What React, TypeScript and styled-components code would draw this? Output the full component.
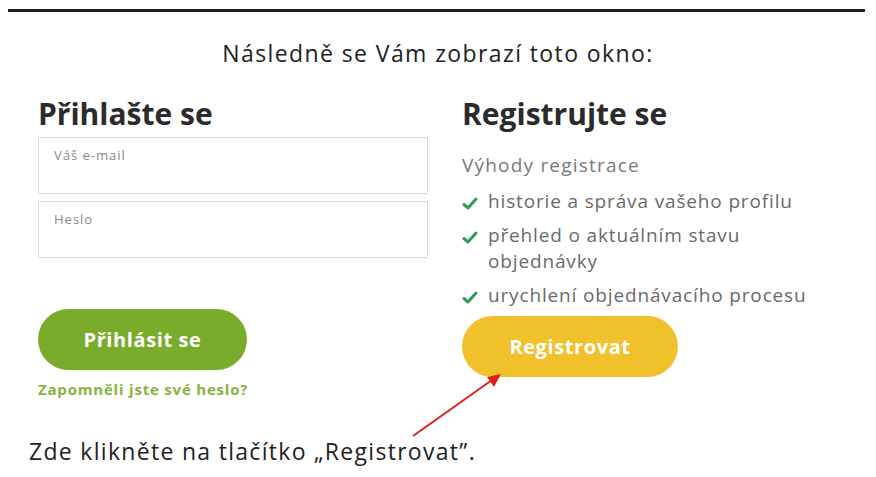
import styled, { createGlobalStyle } from 'styled-components';

const Global = createGlobalStyle`
    html, body {
        margin: 0;
        background: #fff;
    }
    body {
        font-family: "Open Sans", "Noto Sans", sans-serif;
        color: #222;
    }
`

const Page = styled.div`
    position: relative;
    width: 876px;
    height: 477px;
    overflow: hidden;
`

const Rule = styled.div`
    height: 3px;
    background: #1f1f1f;
    margin: 9px 11px 0 8px;
`

const Lead = styled.p`
    margin: 26px 0 0;
    text-align: center;
    font-size: 23px;
    line-height: 30px;
    letter-spacing: 1.4px;
    color: #222;
`

const Columns = styled.div`
    display: grid;
    grid-template-columns: 390px 1fr;
    column-gap: 34px;
    padding-left: 38px;
    margin-top: 29px;
`

const Column = styled.div`
    display: flex;
    flex-direction: column;
    align-items: flex-start;
`

const Heading = styled.h2`
    margin: 0;
    font-size: 30px;
    line-height: 34px;
    font-weight: 700;
    color: #2b2b2b;
`

const Field = styled.label<{ $top: number }>`
    box-sizing: border-box;
    display: block;
    width: 390px;
    height: 57px;
    margin-top: ${p => p.$top}px;
    border: 1px solid #dcdcdc;
    padding: 9px 15px;
    font-size: 13px;
    line-height: 16px;
    letter-spacing: 1px;
    color: #8a8a8a;
`

const Pill = styled.button<{ $bg: string; $w: number; $top: number }>`
    width: ${p => p.$w}px;
    height: 61px;
    margin-top: ${p => p.$top}px;
    border: none;
    border-radius: 31px;
    background: ${p => p.$bg};
    color: #fff;
    font-family: inherit;
    font-size: 20px;
    font-weight: 700;
    letter-spacing: 0.6px;
    cursor: pointer;
`

const Forgot = styled.a`
    margin-top: 9px;
    font-size: 15px;
    line-height: 20px;
    font-weight: 700;
    letter-spacing: 0.8px;
    color: #88b43e;
    text-decoration: none;
`

const Sub = styled.div`
    margin-top: 22px;
    font-size: 19px;
    line-height: 24px;
    letter-spacing: 1.2px;
    color: #7a7a7a;
`

const List = styled.ul`
    list-style: none;
    margin: 11px 0 0;
    padding: 0;
    display: flex;
    flex-direction: column;
    gap: 8px;
`

const Item = styled.li`
    display: flex;
    align-items: flex-start;
    gap: 10px;
    width: 370px;
    font-size: 19px;
    line-height: 26px;
    letter-spacing: 0.85px;
    color: #6a6a6a;

    svg {
        flex: none;
        margin-top: 9px;
    }
`

const Note = styled.p`
    margin: 37px 0 0 29px;
    font-size: 23px;
    line-height: 30px;
    letter-spacing: 1.3px;
    color: #222;
`

const Arrow = styled.svg`
    position: absolute;
    left: 0;
    top: 0;
    pointer-events: none;
`

const Check = () => (
    <svg width="16" height="13" viewBox="0 0 16 13">
        <path d="M2 7.5 L6 11 L14 2" fill="none" stroke="#2f9b55" strokeWidth="3" strokeLinecap="round" strokeLinejoin="round" />
    </svg>
)

const benefits = [
    'historie a správa vašeho profilu',
    'přehled o aktuálním stavu objednávky',
    'urychlení objednávacího procesu',
]

export default function App() {
    return (
        <Page>
            <Global />
            <Rule />
            <Lead>Následně se Vám zobrazí toto okno:</Lead>
            <Columns>
                <Column>
                    <Heading>Přihlašte se</Heading>
                    <Field $top={6}>Váš e-mail</Field>
                    <Field $top={7}>Heslo</Field>
                    <Pill $bg="#7aac2b" $w={209} $top={51}>Přihlásit se</Pill>
                    <Forgot href="#">Zapomněli jste své heslo?</Forgot>
                </Column>
                <Column>
                    <Heading>Registrujte se</Heading>
                    <Sub>Výhody registrace</Sub>
                    <List>
                        {benefits.map(b => (
                            <Item key={b}><Check />{b}</Item>
                        ))}
                    </List>
                    <Pill $bg="#f1c12b" $w={216} $top={8}>Registrovat</Pill>
                </Column>
            </Columns>
            <Note>Zde klikněte na tlačítko „Registrovat”.</Note>
            <Arrow width="876" height="477">
                <line x1="413" y1="436" x2="492" y2="380" stroke="#e0201a" strokeWidth="2" />
                <polygon points="501,374 487,377 494,387" fill="#e0201a" />
            </Arrow>
        </Page>
    )
}
